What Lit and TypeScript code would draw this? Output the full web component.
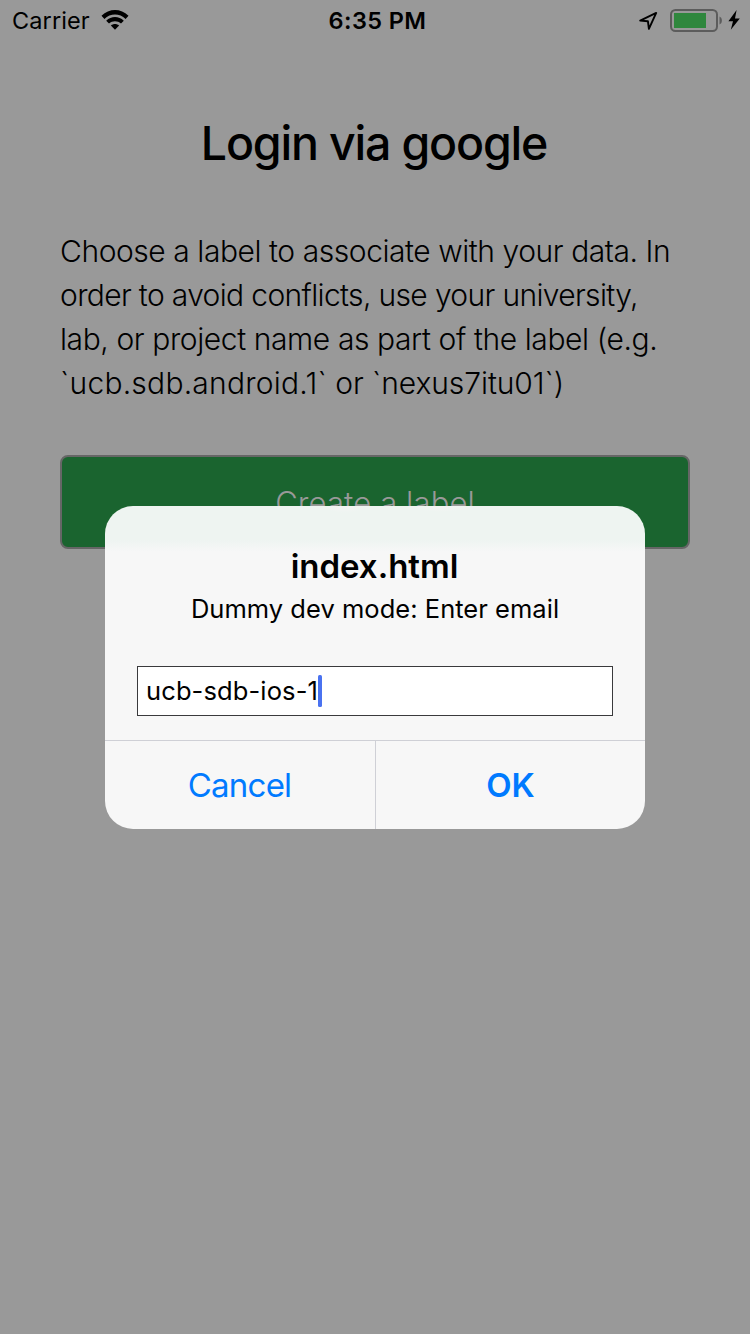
import { LitElement, html, css } from "lit";
import { customElement } from "lit/decorators.js";

@customElement("status-bar")
class StatusBar extends LitElement {
  static styles = css`
    :host {
      display: grid;
      grid-template-columns: 1fr auto 1fr;
      height: 40px;
      line-height: 42px;
      font-size: 23.5px;
      padding: 0 9px 0 12px;
      color: #000;
    }
    .left, .right { display: flex; align-items: center; height: 40px; }
    .left { gap: 11px; }
    .carrier { letter-spacing: 0.1px; padding-top: 2px; }
    .time { font-weight: 600; letter-spacing: 0.4px; padding-left: 2px; }
    .right { justify-content: flex-end; }
    svg { display: block; }
  `;
  render() {
    return html`
      <div class="left">
        <span class="carrier">Carrier</span>
        <svg width="28" height="20" viewBox="0 0 28 20">
          <path d="M0.5 5.8 C8.2 -1.8 19.8 -1.8 27.5 5.8 L24.6 8.9 C18.6 3.1 9.4 3.1 3.4 8.9 Z" />
          <path d="M5.2 10.7 C10.2 5.9 17.8 5.9 22.8 10.7 L20 13.6 C16.6 10.6 11.4 10.6 8 13.6 Z" />
          <path d="M9.9 15.6 C12.3 13.6 15.7 13.6 18.1 15.6 L14 19.8 Z" />
        </svg>
      </div>
      <div class="time">6:35 PM</div>
      <div class="right">
        <svg width="102" height="40" viewBox="0 0 102 40">
          <path d="M1.2 20.6 L17.2 12.9 L9.9 28.8 L8.9 21.2 Z" fill="none" stroke="#000" stroke-width="1.9" stroke-linejoin="round" />
          <rect x="32" y="10" width="46" height="21" rx="4.5" fill="none" stroke="#5c5c5c" stroke-width="2" />
          <rect x="35" y="13" width="32" height="15" fill="#2f873d" />
          <path d="M80.5 16.5 C83.7 17.8 83.7 23.2 80.5 24.5 Z" fill="#5c5c5c" />
          <path d="M97.6 10 L89.4 21.3 H94 L91.8 29.8 L100.8 18.4 H96 Z" />
        </svg>
      </div>
    `;
  }
}

@customElement("login-page")
class LoginPage extends LitElement {
  static styles = css`
    :host { display: flex; flex-direction: column; padding: 0 60px; color: #000; }
    h1 {
      margin: 75px 0 0;
      padding-right: 2px;
      text-align: center;
      font-size: 46.5px;
      line-height: 56px;
      font-weight: 500;
      letter-spacing: -1.18px;
    }
    p {
      margin: 58px 0 0;
      font-size: 30px;
      line-height: 44px;
      font-weight: 300;
    }
    .line { display: block; white-space: nowrap; }
    .l1 { letter-spacing: -0.44px; }
    .l2 { letter-spacing: -0.65px; }
    .l3 { letter-spacing: -0.4px; }
    .l4 { letter-spacing: -0.08px; }
    .wide { letter-spacing: 0.23px; }
    button {
      margin: 50px 0 0;
      height: 94px;
      border: 2px solid #666;
      border-radius: 8px;
      background: #1a642f;
      color: #999;
      font: 300 31px Inter, sans-serif;
      letter-spacing: 0.12px;
      padding: 0;
    }
  `;
  render() {
    return html`
      <h1>Login via google</h1>
      <p>
        <span class="line l1">Choose a label to associate with your data. In</span>
        <span class="line l2">order to avoid conflicts, use your university,</span>
        <span class="line l3">lab, or project name as part of the label (e.g.</span>
        <span class="line l4"><span class="wide">\`ucb.sdb.android.1\`</span> or \`nexus7itu01\`)</span>
      </p>
      <button>Create a label</button>
    `;
  }
}

@customElement("prompt-dialog")
class PromptDialog extends LitElement {
  static styles = css`
    :host {
      box-sizing: border-box;
      display: flex;
      flex-direction: column;
      width: 540px;
      height: 323px;
      border-radius: 28px;
      overflow: hidden;
      color: #000;
      background:
        radial-gradient(ellipse 20px 7px at 240px 0, #f4f4f4, transparent),
        radial-gradient(ellipse 26px 6px at 336px 0, #f4f4f4, transparent),
        linear-gradient(#eef4f1 0 34px, #f7f7f7 46px);
    }
    .body { height: 234px; padding: 40px 32px 0; box-sizing: border-box; text-align: center; }
    .title { font-size: 33px; line-height: 40px; font-weight: 600; padding-right: 1px; }
    .message { font-size: 25.5px; line-height: 32px; margin-top: 7px; letter-spacing: 0.03px; }
    .field {
      margin-top: 41px;
      height: 50px;
      box-sizing: border-box;
      border: 1px solid #3a3a3c;
      background: #fff;
      display: flex;
      align-items: center;
      padding-left: 8px;
      font-size: 25.5px;
      letter-spacing: 0.12px;
    }
    .value { padding-bottom: 2px; }
    .caret { width: 4px; height: 32px; border-radius: 1.5px; background: #4a72f0; }
    .actions { flex: 1; display: grid; grid-template-columns: 270px 1fr; border-top: 1px solid #cfd0d6; }
    .action { display: flex; align-items: center; justify-content: center; color: #007aff; font-size: 33px; }
    .cancel { letter-spacing: -0.75px; padding-right: 1px; }
    .ok { font-weight: 600; border-left: 1px solid #cfd0d6; }
  `;
  render() {
    return html`
      <div class="body">
        <div class="title">index.html</div>
        <div class="message">Dummy dev mode: Enter email</div>
        <div class="field"><span class="value">ucb-sdb-ios-1</span><span class="caret"></span></div>
      </div>
      <div class="actions">
        <div class="action cancel"><span>Cancel</span></div>
        <div class="action ok"><span>OK</span></div>
      </div>
    `;
  }
}

@customElement("app-root")
class AppRoot extends LitElement {
  static styles = css`
    :host {
      display: block;
      position: relative;
      width: 750px;
      height: 1334px;
      overflow: hidden;
      background: #999;
      font-family: Inter, sans-serif;
    }
    .overlay {
      position: absolute;
      inset: 0;
      display: flex;
      align-items: center;
      justify-content: center;
      padding-top: 1px;
      box-sizing: border-box;
    }
  `;
  render() {
    return html`
      <status-bar></status-bar>
      <login-page></login-page>
      <div class="overlay"><prompt-dialog></prompt-dialog></div>
    `;
  }
}
